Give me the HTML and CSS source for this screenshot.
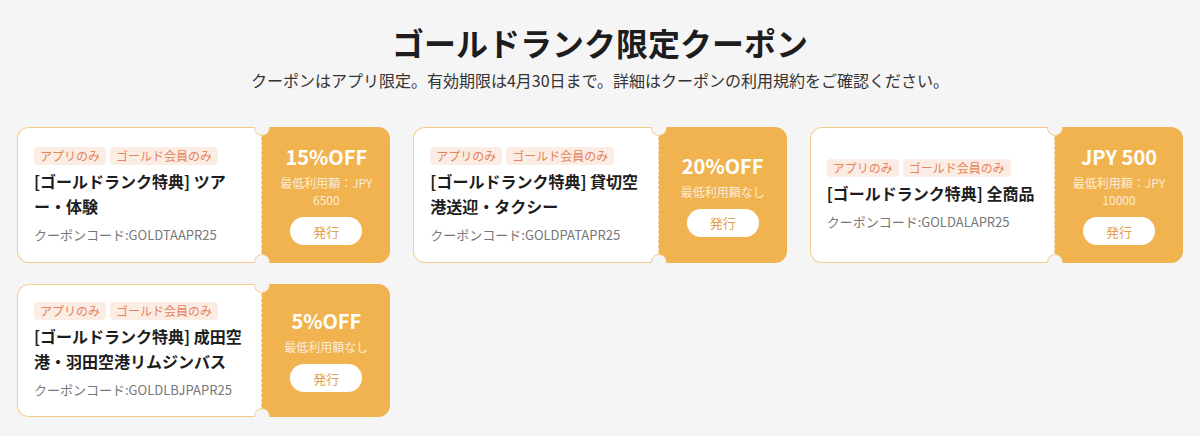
FILE: index.html
```html
<!DOCTYPE html>
<html lang="ja">
<head>
<meta charset="utf-8">
<title>ゴールドランク限定クーポン</title>
<link rel="stylesheet" href="styles.css">
</head>
<body>
<main class="page">
  <header class="head">
    <h1 class="title">ゴールドランク限定クーポン</h1>
    <p class="lead">クーポンはアプリ限定。有効期限は4月30日まで。詳細はクーポンの利用規約をご確認ください。</p>
  </header>
  <section class="grid">
    <article class="coupon">
      <div class="info">
        <div class="tags"><span class="tag">アプリのみ</span><span class="tag">ゴールド会員のみ</span></div>
        <h2 class="name">[ゴールドランク特典] ツアー・体験</h2>
        <p class="code">クーポンコード:GOLDTAAPR25</p>
      </div>
      <div class="stub">
        <div class="amount">15%OFF</div>
        <div class="min">最低利用額：JPY 6500</div>
        <button class="issue">発行</button>
      </div>
    </article>
    <article class="coupon">
      <div class="info">
        <div class="tags"><span class="tag">アプリのみ</span><span class="tag">ゴールド会員のみ</span></div>
        <h2 class="name">[ゴールドランク特典] 貸切空港送迎・タクシー</h2>
        <p class="code">クーポンコード:GOLDPATAPR25</p>
      </div>
      <div class="stub">
        <div class="amount">20%OFF</div>
        <div class="min">最低利用額なし</div>
        <button class="issue">発行</button>
      </div>
    </article>
    <article class="coupon">
      <div class="info">
        <div class="tags"><span class="tag">アプリのみ</span><span class="tag">ゴールド会員のみ</span></div>
        <h2 class="name">[ゴールドランク特典] 全商品</h2>
        <p class="code">クーポンコード:GOLDALAPR25</p>
      </div>
      <div class="stub">
        <div class="amount">JPY 500</div>
        <div class="min">最低利用額：JPY 10000</div>
        <button class="issue">発行</button>
      </div>
    </article>
    <article class="coupon">
      <div class="info">
        <div class="tags"><span class="tag">アプリのみ</span><span class="tag">ゴールド会員のみ</span></div>
        <h2 class="name">[ゴールドランク特典] 成田空港・羽田空港リムジンバス</h2>
        <p class="code">クーポンコード:GOLDLBJPAPR25</p>
      </div>
      <div class="stub">
        <div class="amount">5%OFF</div>
        <div class="min">最低利用額なし</div>
        <button class="issue">発行</button>
      </div>
    </article>
  </section>
</main>
</body>
</html>
```
FILE: styles.css
```css
* { box-sizing: border-box; }

body {
  margin: 0;
  background: #f5f5f5;
  font-family: "Noto Sans CJK JP", "Noto Sans", sans-serif;
  color: #222;
}

.page {
  width: 1166px;
  margin: 0 auto;
}

.head {
  padding-top: 22px;
  text-align: center;
}

.title {
  margin: 0;
  font-size: 32px;
  line-height: 40px;
  font-weight: 700;
  color: #1d1d1d;
}

.lead {
  margin: 6px 0 0;
  font-size: 16px;
  line-height: 24px;
  color: #333;
}

.grid {
  margin-top: 35px;
  display: grid;
  grid-template-columns: repeat(3, 1fr);
  column-gap: 23px;
  row-gap: 21px;
}

.coupon {
  display: flex;
  position: relative;
}

.info {
  flex: 1;
  min-width: 0;
  background: #fff;
  border: 1px solid #f3cc8e;
  border-right: 1px dashed #f3cc8e;
  border-radius: 12px 0 0 12px;
  padding: 17px 16px;
  display: flex;
  flex-direction: column;
  justify-content: center;
}

.tags {
  display: flex;
  gap: 4px;
}

.tag {
  font-size: 12px;
  line-height: 18px;
  padding: 0 6px;
  border-radius: 4px;
  background: #fcede4;
  color: #e5835a;
}

.name {
  margin: 4px 0 0;
  font-size: 16px;
  line-height: 25px;
  font-weight: 700;
  color: #1d1d1d;
}

.code {
  margin: 7px 0 0;
  font-size: 13px;
  line-height: 18px;
  color: #777;
}

.stub {
  position: relative;
  width: 128px;
  flex-shrink: 0;
  background: #f0b34f;
  border-radius: 0 12px 12px 0;
  padding: 18px 12px;
  display: flex;
  flex-direction: column;
  align-items: center;
  justify-content: center;
  text-align: center;
}

.stub::before,
.stub::after {
  content: "";
  position: absolute;
  left: -8px;
  width: 14px;
  height: 14px;
  border-radius: 50%;
  background: #f5f5f5;
  border: 1px solid #f3cc8e;
}

.stub::before {
  top: -7px;
  clip-path: inset(7px 0 -2px 0);
}

.stub::after {
  bottom: -7px;
  clip-path: inset(-2px 0 7px 0);
}

.amount {
  font-size: 20px;
  line-height: 24px;
  font-weight: 700;
  color: #fff;
}

.min {
  margin-top: 5px;
  font-size: 12px;
  line-height: 17px;
  color: rgba(255, 255, 255, 0.78);
}

.issue {
  margin-top: 9px;
  width: 72px;
  height: 28px;
  border: 0;
  border-radius: 14px;
  background: #fff;
  color: #e3a04a;
  font-family: inherit;
  font-size: 13px;
  padding: 0;
}
```
